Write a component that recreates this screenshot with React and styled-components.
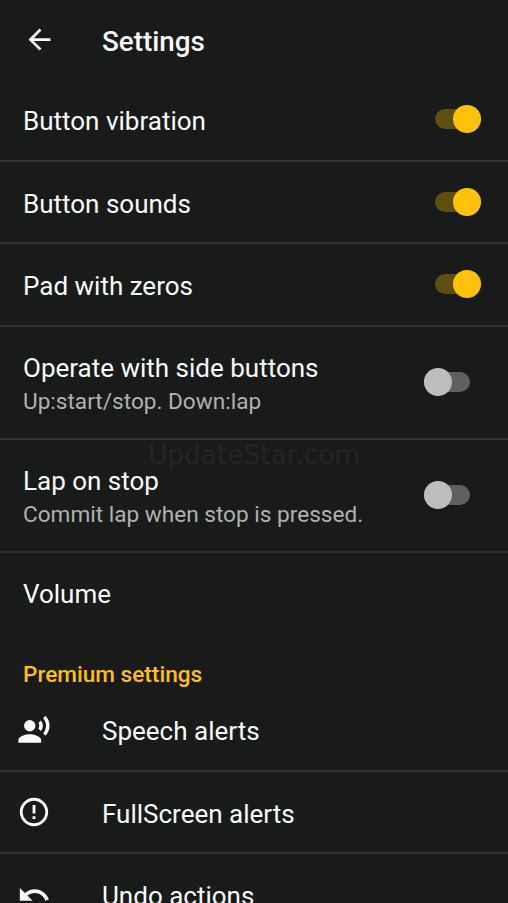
import React from "react";
import styled, { createGlobalStyle } from "styled-components";
import { MdArrowBack, MdErrorOutline, MdRecordVoiceOver, MdUndo } from "react-icons/md";

const toggles = [
  { id: 1, name: "Button vibration", on: true, height: 83 },
  { id: 2, name: "Button sounds", on: true, height: 82 },
  { id: 3, name: "Pad with zeros", on: true, height: 83 },
  { id: 4, name: "Operate with side buttons", text: "Up:start/stop. Down:lap", on: false, height: 113 },
  { id: 5, name: "Lap on stop", text: "Commit lap when stop is pressed.", on: false, height: 113 },
];

const premium = [
  { id: 1, name: "Speech alerts", icon: MdRecordVoiceOver, height: 83 },
  { id: 2, name: "FullScreen alerts", icon: MdErrorOutline, height: 82 },
  { id: 3, name: "Undo actions", icon: MdUndo, height: 83 },
];

const App = () => {
  return (
    <Screen>
      <GlobalStyle />
      <Header>
        <MdArrowBack size={33} />
        <Title>Settings</Title>
      </Header>
      {toggles.map((el) => (
        <Row key={el.id} $height={el.height}>
          <div>
            <Name>{el.name}</Name>
            {el.text && <Description>{el.text}</Description>}
          </div>
          <Switch $on={el.on}>
            <Thumb />
          </Switch>
        </Row>
      ))}
      <VolumeRow $height={80}>
        <Name>Volume</Name>
      </VolumeRow>
      <SectionTitle>Premium settings</SectionTitle>
      {premium.map((el) => (
        <PremiumRow key={el.id} $height={el.height}>
          <el.icon size={34} />
          <Name>{el.name}</Name>
        </PremiumRow>
      ))}
      <Watermark>UpdateStar.com</Watermark>
    </Screen>
  );
};

export default App;

const GlobalStyle = createGlobalStyle`
  body {
    margin: 0;
    background-color: #191b1a;
    overflow: hidden;
  }
`;

const Screen = styled.div`
  position: relative;
  height: 903px;
  overflow: hidden;
  background-color: #191b1a;
  color: #fafafa;
  font-family: Roboto, "Liberation Sans", sans-serif;
`;

const Header = styled.header`
  display: flex;
  align-items: center;
  gap: 46px;
  height: 79px;
  padding-left: 23px;
  box-sizing: border-box;
`;

const Title = styled.h1`
  margin: 5px 0 0;
  font-size: 27.8px;
  font-weight: 500;
  line-height: 34px;
`;

const Row = styled.div`
  display: flex;
  justify-content: space-between;
  align-items: center;
  box-sizing: border-box;
  height: ${(props) => props.$height}px;
  padding: 4px 27px 0 23px;
  border-bottom: 2px solid #2f3130;
`;

const VolumeRow = styled(Row)`
  padding-top: 2px;
  border-bottom: none;
`;

const PremiumRow = styled(Row)`
  justify-content: flex-start;
  gap: 51px;
  padding-left: 17px;

  svg {
    margin-bottom: 4px;
  }
`;

const Name = styled.div`
  font-size: 26px;
  line-height: 33px;
`;

const Description = styled.div`
  color: #b0b1b0;
  font-size: 22.6px;
  line-height: 33px;
`;

const Thumb = styled.div`
  width: 28px;
  height: 28px;
  border-radius: 50%;
`;

const Switch = styled.div`
  display: flex;
  align-items: center;
  justify-content: ${(props) => (props.$on ? "flex-end" : "flex-start")};
  width: 46px;
  height: 20px;
  margin-right: ${(props) => (props.$on ? "0" : "11px")};
  margin-bottom: 5px;
  border-radius: 10px;
  background-color: ${(props) => (props.$on ? "#5f4e12" : "#5e6160")};

  ${Thumb} {
    background-color: ${(props) => (props.$on ? "#ffc10a" : "#bdbdbd")};
  }
`;

const SectionTitle = styled.h2`
  margin: 0;
  padding: 27px 0 0 23px;
  height: 29px;
  color: #fbc012;
  font-size: 22.6px;
  font-weight: 500;
  line-height: 29px;
`;

const Watermark = styled.div`
  position: absolute;
  top: 438px;
  left: 0;
  width: 508px;
  text-align: center;
  color: #242625;
  font-family: "DejaVu Sans", sans-serif;
  font-size: 26.4px;
  line-height: 34px;
`;
